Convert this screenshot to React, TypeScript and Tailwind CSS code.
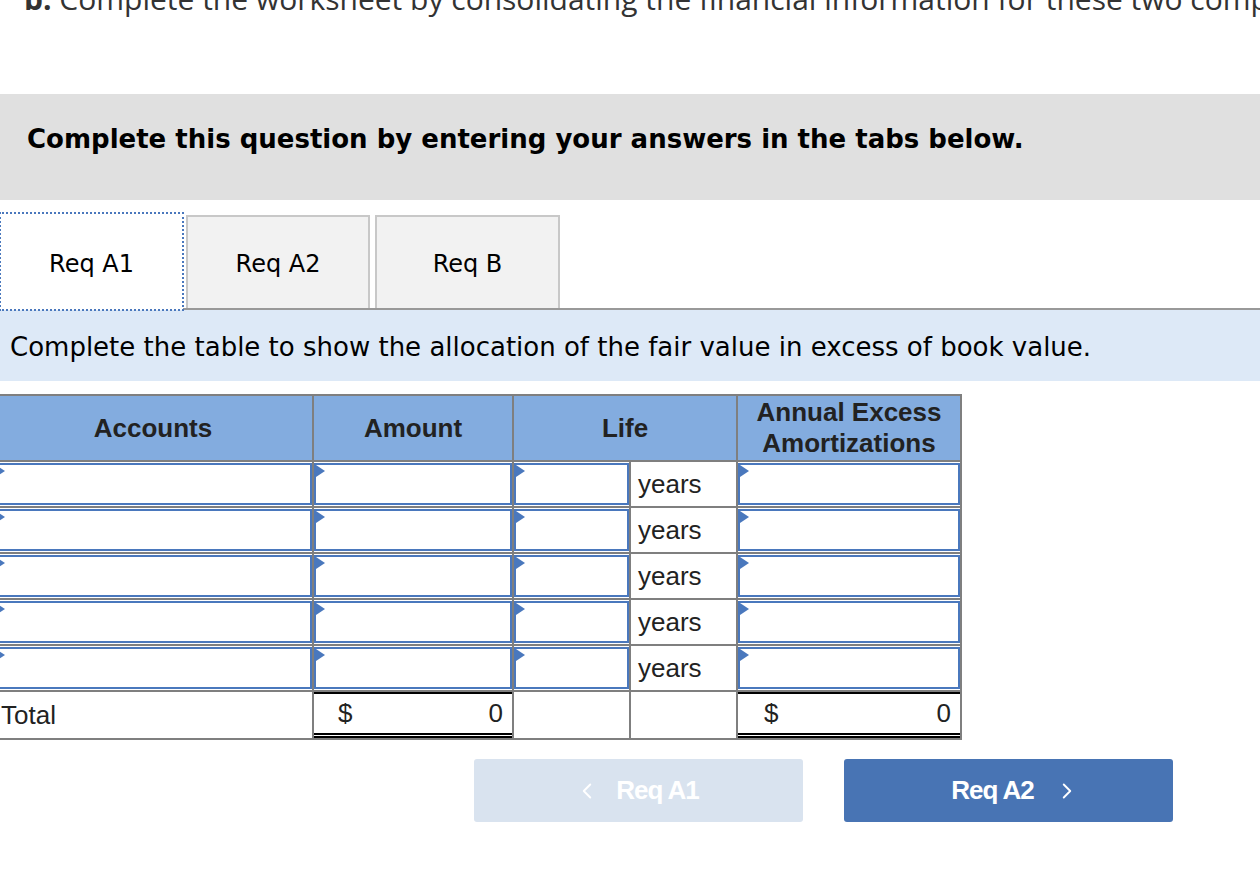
import { ChevronLeft, ChevronRight } from 'lucide-react';

const rows = [0, 1, 2, 3, 4];

const Marker = () => (
  <span className="absolute left-0 top-0 h-0 w-0 border-y-[6px] border-l-[9px] border-y-transparent border-l-[#4a78bd]" />
);

const InputCell = () => (
  <td className="border-2 border-[#7f7f7f] p-0">
    <div className="relative h-[42px] border-2 border-[#4a78bd] bg-white">
      <Marker />
    </div>
  </td>
);

const App = () => {
  const tabs = ['Req A1', 'Req A2', 'Req B'];

  return (
    <div className="h-[878px] w-[1260px] overflow-hidden bg-white">
      <div className="-mt-[24px] h-[118px] whitespace-nowrap pl-[24px] font-['Open_Sans',sans-serif] text-[30px] text-[#333]">
        <span className="font-bold">b.</span> Complete the worksheet by consolidating the financial information for these two companies.
      </div>

      <div className="flex h-[106px] items-center bg-[#e0e0e0] pb-[16px] pl-[27px] font-['DejaVu_Sans',sans-serif] text-[26px] font-bold text-black">
        Complete this question by entering your answers in the tabs below.
      </div>

      <div className="mt-[15px] flex h-[95px] items-end border-b-2 border-[#999] font-['DejaVu_Sans',sans-serif] text-[24px] text-black">
        {tabs.map((t, i) => (
          <div
            key={t}
            className={
              i === 0
                ? 'relative -mb-[2px] flex h-[97px] w-[183px] items-center justify-center bg-white pt-[4px] outline-2 outline-dotted outline-[#4a78bd] -outline-offset-1'
                : i === 1
                  ? 'ml-[3px] flex h-[93px] w-[184px] items-center justify-center border-2 border-b-0 border-[#c8c8c8] bg-[#f2f2f2] pt-[2px]'
                  : 'ml-[5px] flex h-[93px] w-[185px] items-center justify-center border-2 border-b-0 border-[#c8c8c8] bg-[#f2f2f2] pt-[2px]'
            }
          >
            {t}
          </div>
        ))}
      </div>

      <div className="flex h-[71px] items-center bg-[#dde9f7] pl-[10px] pt-[4px] font-['DejaVu_Sans',sans-serif] text-[26px] text-black">
        Complete the table to show the allocation of the fair value in excess of book value.
      </div>

      <table className="-ml-[8px] mt-[13px] w-[968px] table-fixed border-collapse font-['Liberation_Sans',sans-serif] text-[26px] text-[#222]">
        <colgroup>
          <col className="w-[320px]" />
          <col className="w-[200px]" />
          <col className="w-[117px]" />
          <col className="w-[107px]" />
          <col className="w-[224px]" />
        </colgroup>
        <thead>
          <tr className="h-[66px] bg-[#83acdf] font-bold">
            <th className="border-2 border-[#7f7f7f]">Accounts</th>
            <th className="border-2 border-[#7f7f7f]">Amount</th>
            <th colSpan={2} className="border-2 border-[#7f7f7f]">Life</th>
            <th className="border-2 border-[#7f7f7f] leading-[31px]">
              Annual Excess
              <br />
              Amortizations
            </th>
          </tr>
        </thead>
        <tbody>
          {rows.map((r) => (
            <tr key={r} className="h-[46px]">
              <InputCell />
              <InputCell />
              <InputCell />
              <td className="border-2 border-[#7f7f7f] pl-[7px]">years</td>
              <InputCell />
            </tr>
          ))}
          <tr className="h-[46px]">
            <td className="border-y-2 border-[#7f7f7f] pl-[8px] text-left">Total</td>
            <td className="border-x-2 border-b-2 border-[#7f7f7f] p-0 align-top">
              <div className="flex h-[46px] items-center justify-between border-b-[5px] border-t-2 border-double border-b-black border-t-black pl-[24px] pr-[9px] [border-top-style:solid]">
                <span>$</span>
                <span>0</span>
              </div>
            </td>
            <td className="border-2 border-[#7f7f7f]" />
            <td className="border-2 border-[#7f7f7f]" />
            <td className="border-x-2 border-b-2 border-[#7f7f7f] p-0 align-top">
              <div className="flex h-[46px] items-center justify-between border-b-[5px] border-t-2 border-double border-b-black border-t-black pl-[26px] pr-[9px] [border-top-style:solid]">
                <span>$</span>
                <span>0</span>
              </div>
            </td>
          </tr>
        </tbody>
      </table>

      <div className="mt-[19px] flex gap-[41px] pl-[474px] font-['Liberation_Sans',sans-serif] text-[26px] font-bold text-white">
        <button className="flex h-[63px] w-[329px] items-center justify-center gap-[16px] rounded-[3px] bg-[#d9e3ef] pr-[4px]">
          <ChevronLeft size={26} strokeWidth={1.75} />
          <span className="tracking-[-1px]">Req A1</span>
        </button>
        <button className="flex h-[63px] w-[329px] items-center justify-center gap-[20px] rounded-[3px] bg-[#4874b4] pl-[14px]">
          <span className="tracking-[-1px]">Req A2</span>
          <ChevronRight size={26} strokeWidth={1.75} />
        </button>
      </div>
    </div>
  );
};

export default App;
